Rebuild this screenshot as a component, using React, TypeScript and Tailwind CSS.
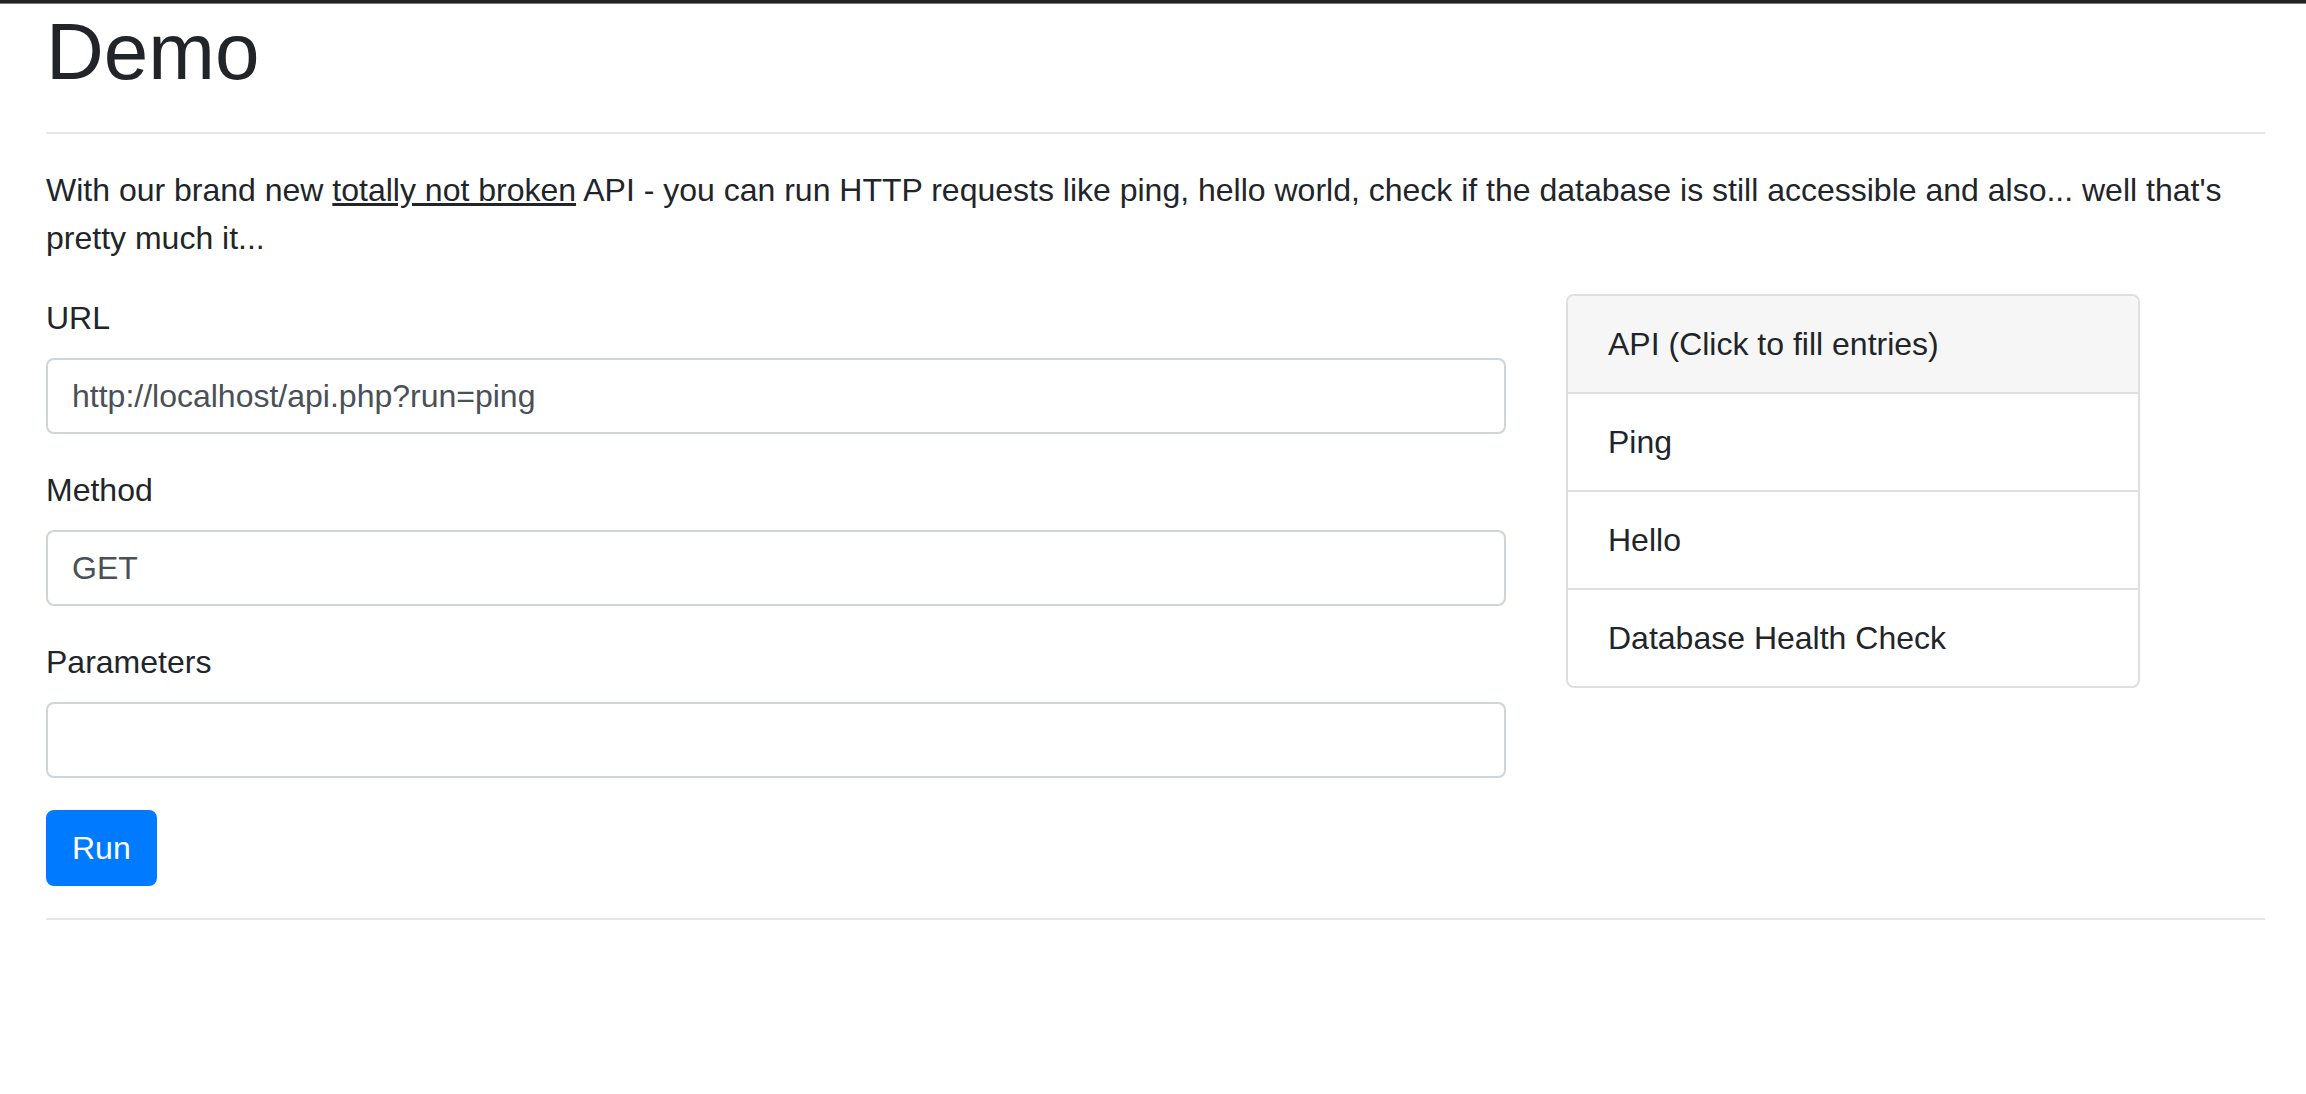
import React from 'react';

const apiEntries = ['Ping', 'Hello', 'Database Health Check'];

const Field: React.FC<{ label: string; value?: string }> = ({ label, value }) => (
  <div className="mb-[32px]">
    <label className="block mb-[16px] text-[32px] leading-[48px]">{label}</label>
    <input
      type="text"
      defaultValue={value}
      className="block w-full h-[76px] px-[24px] border-2 border-[#ced4da] rounded-[8px] bg-white text-[32px] leading-[48px] text-[#495057] outline-none"
    />
  </div>
);

export default function App() {
  return (
    <div className="min-h-screen bg-white text-[#212529] font-['Liberation_Sans',Arial,sans-serif]">
      <div className="h-[4px] bg-[#232323] border-b border-[#7a7a7a]" />
      <div className="pl-[46px] pr-[41px]">
        <h1 className="text-[80px] leading-[96px] font-normal">Demo</h1>
        <hr className="mt-[32px] mb-[32px] border-0 border-t-2 border-[#e6e6e6]" />
        <p className="text-[32px] leading-[48px] mb-[32px]">
          With our brand new <span className="underline">totally not broken</span> API - you can run HTTP requests like
          ping, hello world, check if the database is still accessible and also... well that's pretty much it...
        </p>

        <div className="flex gap-[60px]">
          <div className="w-[1460px] shrink-0">
            <Field label="URL" value="http://localhost/api.php?run=ping" />
            <Field label="Method" value="GET" />
            <Field label="Parameters" />
            <button className="h-[76px] px-[24px] border-2 border-[#007bff] bg-[#007bff] text-white text-[32px] leading-[48px] rounded-[8px]">
              Run
            </button>
          </div>

          <div className="flex-1">
            <div className="w-[574px] border-2 border-[#dfdfdf] rounded-[8px] overflow-hidden">
              <div className="px-[40px] py-[24px] bg-[#f6f6f6] text-[32px] leading-[48px]">API (Click to fill entries)</div>
              {apiEntries.map((entry) => (
                <div key={entry} className="px-[40px] py-[24px] border-t-2 border-[#dfdfdf] text-[32px] leading-[48px] cursor-pointer">
                  {entry}
                </div>
              ))}
            </div>
          </div>
        </div>

        <hr className="mt-[32px] border-0 border-t-2 border-[#e6e6e6]" />
      </div>
    </div>
  );
}
